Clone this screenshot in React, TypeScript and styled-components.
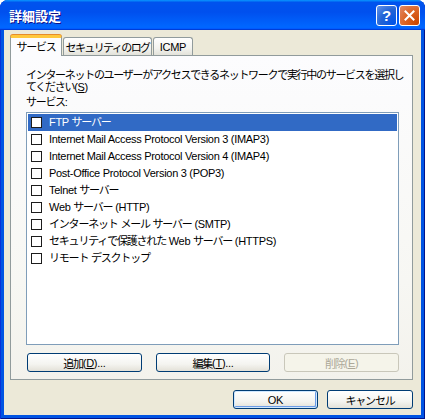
import styled, { createGlobalStyle, css } from 'styled-components';

const GlobalStyle = createGlobalStyle`
  html, body {
    margin: 0;
    padding: 0;
    background: #ffffff;
  }
  * {
    box-sizing: border-box;
  }
`;

const uiFont = `'Liberation Sans', 'Noto Sans CJK JP', sans-serif`;

const Window = styled.div`
  width: 425px;
  height: 419px;
  display: flex;
  flex-direction: column;
  background: #0054e3;
  border-radius: 8px 8px 0 0;
  overflow: hidden;
  font-family: ${uiFont};
  font-size: 11px;
  letter-spacing: -0.3px;
  color: #000;
  box-shadow: inset 1px 0 #0831d9, inset -1px -1px #00138c;
`;

const TitleBar = styled.div`
  height: 30px;
  flex: none;
  display: flex;
  align-items: center;
  padding: 0 5px 0 9px;
  background: linear-gradient(
    180deg,
    #0997ff,
    #0053ee 8%,
    #0050ee 40%,
    #0066ff 88%,
    #0066ff 93%,
    #005bff 95%,
    #003dd7 96%,
    #003dd7
  );
`;

const Title = styled.span`
  flex: 1;
  color: #fff;
  font-family: 'Noto Sans CJK JP', sans-serif;
  font-weight: 700;
  font-size: 13px;
  letter-spacing: 0;
  text-shadow: 1px 1px #0f1089;
`;

const Controls = styled.div`
  display: flex;
  gap: 2px;
`;

const ControlButton = styled.div<{ $close?: boolean }>`
  width: 21px;
  height: 21px;
  border: 1px solid #fff;
  border-radius: 3px;
  display: flex;
  align-items: center;
  justify-content: center;
  color: #fff;
  font-family: 'Liberation Sans', sans-serif;
  font-weight: 700;
  font-size: 15px;
  ${({ $close }) =>
    $close
      ? css`
          background: radial-gradient(circle at 90% 90%, #cc4600 0%, #dc6527 55%, #e08a6a 100%);
        `
      : css`
          background: radial-gradient(circle at 90% 90%, #0054e9 0%, #2263d5 55%, #6696eb 100%);
        `}
`;

const Body = styled.div`
  flex: 1;
  margin: 0 4px 4px 4px;
  background: #ece9d8;
  display: flex;
  flex-direction: column;
  padding: 5px 8px 6px 6px;
`;

const TabRow = styled.div`
  height: 20px;
  display: flex;
  align-items: flex-end;
  position: relative;
  z-index: 1;
`;

const Tab = styled.div<{ $active?: boolean; $w: number }>`
  width: ${({ $w }) => $w}px;
  display: flex;
  align-items: center;
  justify-content: center;
  border: 1px solid #919b9c;
  border-bottom: none;
  border-radius: 3px 3px 0 0;
  white-space: nowrap;
  ${({ $active }) =>
    $active
      ? css`
          height: 21px;
          margin-bottom: -1px;
          background: #fcfcfe;
          border-top: 3px solid #ffc83c;
          box-shadow: 0 -1px 0 #e68b2c;
          padding-bottom: 2px;
        `
      : css`
          height: 18px;
          margin-left: 1px;
          background: linear-gradient(180deg, #ffffff 0%, #f3f3ef 60%, #e3e2da 100%);
        `}
`;

const Panel = styled.div`
  height: 325px;
  border: 1px solid #919b9c;
  background: linear-gradient(180deg, #fcfcfe 0%, #f7f7f3 70%, #f3f2ec 100%);
  display: flex;
  flex-direction: column;
  padding: 13px 13px 7px 15px;
`;

const Description = styled.div`
  line-height: 12px;
  white-space: nowrap;
`;

const Label = styled.div`
  margin-top: 3px;
  line-height: 12px;
`;

const ListBox = styled.div`
  margin-top: 4px;
  width: 373px;
  flex: 1;
  border: 1px solid #7f9db9;
  background: #fff;
  padding: 1px;
`;

const Row = styled.div<{ $selected?: boolean }>`
  height: 17px;
  display: flex;
  align-items: center;
  padding-left: 3px;
  white-space: nowrap;
  background: ${({ $selected }) => ($selected ? '#316ac5' : 'transparent')};
  color: ${({ $selected }) => ($selected ? '#fff' : '#000')};
`;

const Check = styled.span`
  width: 11px;
  height: 11px;
  border: 1px solid #1c1c1c;
  background: #fff;
  margin-right: 7px;
  flex: none;
`;

const RowText = styled.span`
  line-height: 17px;
`;

// Japanese runs are set tighter, as the narrow kana of the original UI font
const Jp = styled.span<{ $ls?: number }>`
  letter-spacing: ${({ $ls }) => $ls ?? -1.2}px;
`;

const ButtonRow = styled.div<{ $end?: boolean }>`
  display: flex;
  gap: ${({ $end }) => ($end ? 9 : 14)}px;
  justify-content: ${({ $end }) => ($end ? 'flex-end' : 'flex-start')};
  margin-top: ${({ $end }) => ($end ? 10 : 8)}px;
  padding-left: ${({ $end }) => ($end ? 0 : 1)}px;
`;

const Button = styled.div<{ $w: number; $default?: boolean; $disabled?: boolean }>`
  width: ${({ $w }) => $w}px;
  height: 19px;
  display: flex;
  align-items: center;
  justify-content: center;
  border-radius: 3px;
  border: 1px solid ${({ $disabled }) => ($disabled ? '#c9c7ba' : '#003c74')};
  color: ${({ $disabled }) => ($disabled ? '#aca899' : '#000')};
  background: ${({ $disabled }) =>
    $disabled ? '#f5f4ea' : 'linear-gradient(180deg, #ffffff 0%, #f4f4f0 60%, #e3e1d8 100%)'};
  box-shadow: ${({ $default }) =>
    $default ? 'inset 0 0 0 1px #cee7ff, inset -1px -1px 0 1px #6c9ce6' : 'none'};
  white-space: nowrap;
`;

// split a label into runs of Japanese and Latin so the Japanese runs can be tightened
const splitRuns = (s: string) => s.match(/[\u3000-\u9fff\uff00-\uffef]+|[^\u3000-\u9fff\uff00-\uffef]+/g) || [];
const isJp = (s: string) => /[\u3000-\u9fff\uff00-\uffef]/.test(s);

const services = [
  'FTP サーバー',
  'Internet Mail Access Protocol Version 3 (IMAP3)',
  'Internet Mail Access Protocol Version 4 (IMAP4)',
  'Post-Office Protocol Version 3 (POP3)',
  'Telnet サーバー',
  'Web サーバー (HTTP)',
  'インターネット メール サーバー (SMTP)',
  'セキュリティで保護された Web サーバー (HTTPS)',
  'リモート デスクトップ',
];

export default function App() {
  return (
    <>
      <GlobalStyle />
      <Window>
        <TitleBar>
          <Title>詳細設定</Title>
          <Controls>
            <ControlButton>?</ControlButton>
            <ControlButton $close>
              <svg width="11" height="11" viewBox="0 0 11 11">
                <path d="M1.5 1.5 L9.5 9.5 M9.5 1.5 L1.5 9.5" stroke="#fff" strokeWidth="2" strokeLinecap="square" />
              </svg>
            </ControlButton>
          </Controls>
        </TitleBar>
        <Body>
          <TabRow>
            <Tab $active $w={52}>
              <Jp $ls={-1.3}>サービス</Jp>
            </Tab>
            <Tab $w={89}>
              <Jp $ls={-1.6}>セキュリティのログ</Jp>
            </Tab>
            <Tab $w={40}>ICMP</Tab>
          </TabRow>
          <Panel>
            <Description>
              <Jp $ls={-1.3}>インターネットのユーザーがアクセスできるネットワークで実行中のサービスを選択し</Jp>
              <br />
              <Jp $ls={-1.3}>てください</Jp>(<u>S</u>)
            </Description>
            <Label>
              <Jp $ls={-1.3}>サービス</Jp>:
            </Label>
            <ListBox>
              {services.map((s, i) => (
                <Row key={s} $selected={i === 0}>
                  <Check />
                  <RowText>
                    {splitRuns(s).map((run, j) => (isJp(run) ? <Jp key={j}>{run}</Jp> : run))}
                  </RowText>
                </Row>
              ))}
            </ListBox>
            <ButtonRow>
              <Button $w={115}>
                <Jp>追加</Jp>(<u>D</u>)...
              </Button>
              <Button $w={115}>
                <Jp>編集</Jp>(<u>T</u>)...
              </Button>
              <Button $w={115} $disabled>
                <Jp>削除</Jp>(<u>E</u>)
              </Button>
            </ButtonRow>
          </Panel>
          <ButtonRow $end>
            <Button $w={85} $default>
              OK
            </Button>
            <Button $w={86}>
              <Jp>キャンセル</Jp>
            </Button>
          </ButtonRow>
        </Body>
      </Window>
    </>
  );
}
